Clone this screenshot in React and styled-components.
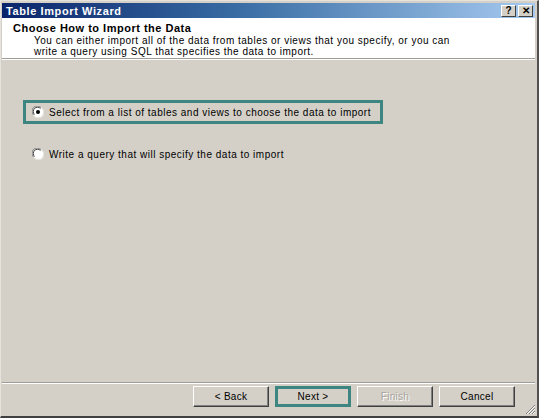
import React from "react";
import styled, { createGlobalStyle } from "styled-components";

const Global = createGlobalStyle`
  html, body { margin: 0; padding: 0; background: #d4d0c8; }
  body { font-family: "Liberation Sans", Arial, sans-serif; }
`;

const Window = styled.div`
  width: 539px;
  height: 418px;
  box-sizing: border-box;
  background: #d4d0c8;
  border-top: 1px solid #e6e3dd;
  border-left: 1px solid #e6e3dd;
  border-right: 2px solid #505050;
  border-bottom: 2px solid #404040;
  padding: 2px 2px 0 1px;
  display: flex;
  flex-direction: column;
  position: relative;
`;

const TitleBar = styled.div`
  height: 15px;
  flex: none;
  display: flex;
  align-items: center;
  justify-content: space-between;
  padding: 0 2px 0 4px;
  background: linear-gradient(to right, #0a246a 0%, #3a6ea5 45%, #a6caf0 100%);
`;

const TitleText = styled.span`
  color: #fff;
  font-weight: bold;
  font-size: 11px;
  letter-spacing: 0.6px;
`;

const CaptionButtons = styled.div`
  display: flex;
  gap: 2px;
`;

const CaptionButton = styled.div`
  width: 15px;
  height: 12px;
  box-sizing: border-box;
  background: #d4d0c8;
  border-top: 1px solid #fff;
  border-left: 1px solid #fff;
  border-right: 1px solid #404040;
  border-bottom: 1px solid #404040;
  display: flex;
  align-items: center;
  justify-content: center;
  font-size: 10px;
  font-weight: bold;
  color: #000;
  line-height: 1;
`;

const Header = styled.div`
  height: 41px;
  flex: none;
  background: #fff;
  border-bottom: 1px solid #a09d98;
  box-shadow: 0 1px 0 #fff;
  padding: 4px 0 0 11px;
  box-sizing: border-box;
`;

const HeaderTitle = styled.div`
  font-size: 11px;
  font-weight: bold;
  color: #000;
  letter-spacing: 0.5px;
  line-height: 13px;
`;

const HeaderDesc = styled.div`
  font-size: 10px;
  color: #000;
  padding-left: 21px;
  line-height: 11px;
  letter-spacing: 0.5px;
`;

const Body = styled.div`
  flex: 1;
  padding: 41px 0 0 21px;
  display: flex;
  flex-direction: column;
  align-items: flex-start;
`;

const Option = styled.label`
  display: flex;
  align-items: center;
  gap: 5px;
  box-sizing: border-box;
  font-size: 10px;
  letter-spacing: 0.5px;
  color: #000;
  height: 24px;
  padding-left: ${(p) => (p.$focused ? "6px" : "9px")};
  width: ${(p) => (p.$focused ? "360px" : "auto")};
  border: ${(p) => (p.$focused ? "3px solid #3d8580" : "none")};
  margin-top: ${(p) => p.$mt || 0}px;
`;

const Footer = styled.div`
  height: 34px;
  flex: none;
  border-top: 1px solid #a09d98;
  box-shadow: inset 0 1px 0 #fff;
  display: flex;
  justify-content: flex-end;
  align-items: flex-start;
  gap: 6px;
  padding: 3px 20px 0 0;
  box-sizing: border-box;
`;

const Button = styled.div`
  width: 76px;
  height: 21px;
  box-sizing: border-box;
  display: flex;
  align-items: center;
  justify-content: center;
  font-size: 10px;
  letter-spacing: 0.3px;
  color: ${(p) => (p.$disabled ? "#a8a59f" : "#000")};
  text-shadow: ${(p) => (p.$disabled ? "1px 1px 0 #fff" : "none")};
  background: #d4d0c8;
  border: ${(p) => (p.$focused ? "3px solid #3d8580" : "1px solid")};
  border-color: ${(p) =>
    p.$focused ? "#3d8580" : "#fff #404040 #404040 #fff"};
  box-shadow: ${(p) =>
    p.$focused ? "none" : "inset -1px -1px 0 #808080"};
`;

const Grip = styled.svg`
  position: absolute;
  right: 1px;
  bottom: 1px;
`;

const Radio = ({ checked }) => (
  <svg width="12" height="12" viewBox="0 0 12 12">
    <circle cx="6" cy="6" r="5.5" fill="#fff" />
    <path d="M1.5 9 A5 5 0 0 1 9 1.5" stroke="#808080" strokeWidth="1" fill="none" />
    <path d="M2.5 8.5 A4 4 0 0 1 8.5 2.5" stroke="#404040" strokeWidth="1" fill="none" />
    <path d="M10.5 3 A5 5 0 0 1 3 10.5" stroke="#e8e6e2" strokeWidth="1" fill="none" />
    {checked && <circle cx="6" cy="6" r="2" fill="#000" />}
  </svg>
);

export default function App() {
  return (
    <>
      <Global />
      <Window>
        <TitleBar>
          <TitleText>Table Import Wizard</TitleText>
          <CaptionButtons>
            <CaptionButton>?</CaptionButton>
            <CaptionButton>✕</CaptionButton>
          </CaptionButtons>
        </TitleBar>
        <Header>
          <HeaderTitle>Choose How to Import the Data</HeaderTitle>
          <HeaderDesc>
            You can either import all of the data from tables or views that you specify, or you can
            <br />
            write a query using SQL that specifies the data to import.
          </HeaderDesc>
        </Header>
        <Body>
          <Option $focused>
            <Radio checked />
            Select from a list of tables and views to choose the data to import
          </Option>
          <Option $mt={18}>
            <Radio />
            Write a query that will specify the data to import
          </Option>
        </Body>
        <Footer>
          <Button>&lt; Back</Button>
          <Button $focused>Next &gt;</Button>
          <Button $disabled>Finish</Button>
          <Button>Cancel</Button>
        </Footer>
        <Grip width="12" height="12" viewBox="0 0 12 12">
          <path d="M11 2 L2 11 M11 5 L5 11 M11 8 L8 11" stroke="#808080" strokeWidth="1" />
          <path d="M11 3 L3 11 M11 6 L6 11 M11 9 L9 11" stroke="#fff" strokeWidth="1" />
        </Grip>
      </Window>
    </>
  );
}
